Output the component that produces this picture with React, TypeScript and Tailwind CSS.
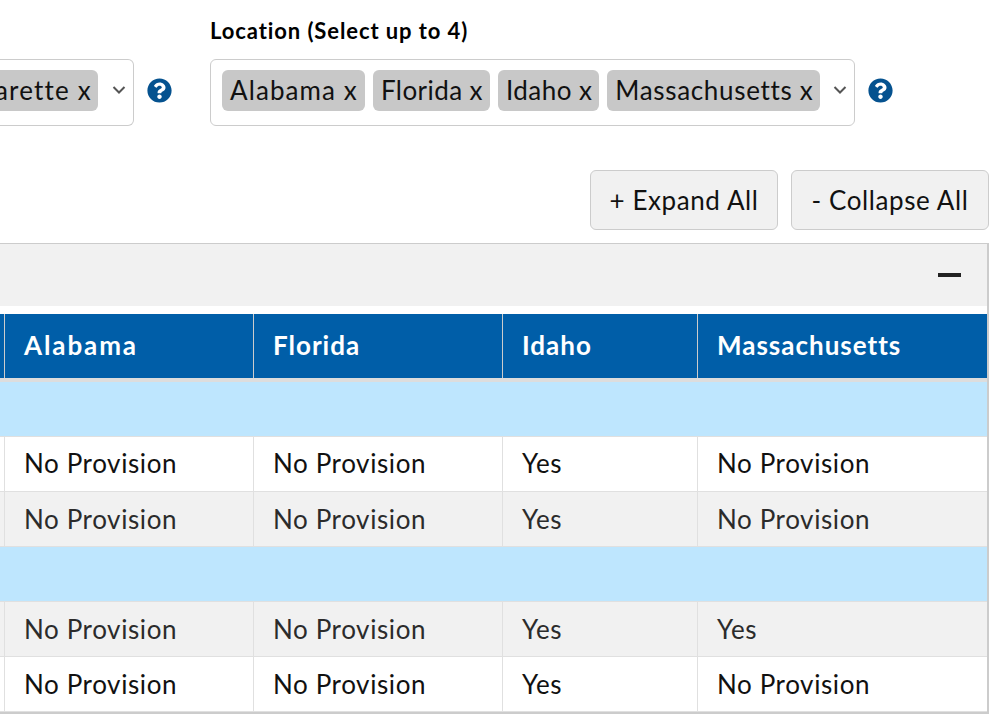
import { FaQuestionCircle } from "react-icons/fa";

const COLS = "grid grid-cols-[5px_249px_249px_195px_289px]";

function Chevron() {
  return (
    <svg width="14" height="10" viewBox="0 0 14 10" className="shrink-0 mb-[2px]">
      <path d="M1.5 2 L7 7.5 L12.5 2" fill="none" stroke="#555" strokeWidth="2" />
    </svg>
  );
}

function Chip({ text, className }: { text: string; className: string }) {
  return (
    <span className={`h-[41px] rounded-[6px] bg-[#c8c8c8] pl-2 flex items-center text-[26px] text-[#111] whitespace-nowrap ${className}`}>
      {text}
    </span>
  );
}

function Help() {
  return <FaQuestionCircle className="text-[#05528f] shrink-0" size={25} />;
}

function Row({ cells, gray, lift }: { cells: string[]; gray?: boolean; lift?: boolean }) {
  return (
    <div className={`${COLS} h-[55px] border-b border-[#e0e0e0] ${gray ? "bg-[#f1f1f1] text-[#2b2b2b]" : "bg-white text-[#111]"}`}>
      <div className="border-r border-[#e0e0e0]" />
      {cells.map((c, i) => (
        <div key={i} className={`flex items-center pl-[19px] ${lift ? "pb-[2px]" : ""} ${i < 3 ? "border-r border-[#e0e0e0]" : ""}`}>
          {c}
        </div>
      ))}
    </div>
  );
}

function Band({ h }: { h: string }) {
  return <div className={`${h} bg-[#bee6fe] border-b border-[#e0e0e0]`} />;
}

export default function App() {
  return (
    <div className="w-[1001px] h-[719px] bg-white overflow-hidden font-['Lato','Noto_Sans',sans-serif]">
      <div className="w-[989px]">
        <div className="flex justify-end overflow-hidden pr-[96px] pt-[18px]">
          <div className="flex items-end shrink-0">
            <div className="flex items-center h-[67px] w-[300px] shrink-0 border border-[#ccc] rounded-[6px] justify-end pr-[7px] pb-[4px] gap-[14px] border-l-0 rounded-l-none">
              <Chip text="Cigarette x" className="pr-[6px] tracking-[1.2px]" />
              <Chevron />
            </div>
            <div className="h-[67px] flex items-center ml-[13px] pb-[4px]">
              <Help />
            </div>
          </div>
          <div className="ml-[38px] shrink-0">
            <div className="h-[24px] mb-[17px] flex items-center text-[22px] font-bold text-black whitespace-nowrap tracking-[0.9px]">
              Location (Select up to 4)
            </div>
            <div className="flex items-center">
              <div className="w-[645px] h-[67px] border border-[#ccc] rounded-[6px] flex items-center pl-[11px] pr-[7px] pb-[4px]">
                <div className="flex gap-[8px]">
                  <Chip text="Alabama x" className="pr-[7px] tracking-[1.1px]" />
                  <Chip text="Florida x" className="pr-[7px] tracking-[0.44px]" />
                  <Chip text="Idaho x" className="pr-[7px] tracking-[0.44px]" />
                  <Chip text="Massachusetts x" className="pr-[7px] tracking-[0.67px]" />
                </div>
                <div className="ml-auto"><Chevron /></div>
              </div>
              <div className="ml-[13px] pb-[4px]"><Help /></div>
            </div>
          </div>
        </div>

        <div className="flex justify-end gap-[13px] mt-[44px]">
          <button className="h-[60px] w-[188px] bg-[#f1f1f1] border border-[#ccc] rounded-[6px] text-[26px] tracking-[0.6px] text-[#111]">+ Expand All</button>
          <button className="h-[60px] w-[198px] bg-[#f1f1f1] border border-[#ccc] rounded-[6px] text-[26px] tracking-[0.6px] text-[#111]">- Collapse All</button>
        </div>

        <div className="mt-[13px] border-t border-r-2 border-b-2 border-[#ccc] text-[26px] tracking-[0.6px]">
          <div className="h-[62px] bg-[#f1f1f1] flex items-center justify-end pr-[26px]">
            <div className="w-[23px] h-[4px] bg-[#222]" />
          </div>
          <div className="h-[8px] bg-white" />
          <div className={`${COLS} h-[64px] bg-[#005ea8] text-white font-bold text-[26px]`}>
            <div className="border-r border-[#ccc]" />
            {["Alabama", "Florida", "Idaho", "Massachusetts"].map((c, i) => (
              <div key={c} className={`flex items-center pl-[19px] pb-[2px] ${c === "Alabama" ? "tracking-[1.9px]" : "tracking-[1px]"} ${i < 3 ? "border-r border-[#ccc]" : ""}`}>
                {c}
              </div>
            ))}
          </div>
          <div className="h-[4px] bg-[#ddd]" />
          <Band h="h-[55px]" />
          <Row lift cells={["No Provision", "No Provision", "Yes", "No Provision"]} />
          <Row gray cells={["No Provision", "No Provision", "Yes", "No Provision"]} />
          <Band h="h-[55px]" />
          <Row gray cells={["No Provision", "No Provision", "Yes", "Yes"]} />
          <Row cells={["No Provision", "No Provision", "Yes", "No Provision"]} />
        </div>
      </div>
    </div>
  );
}
